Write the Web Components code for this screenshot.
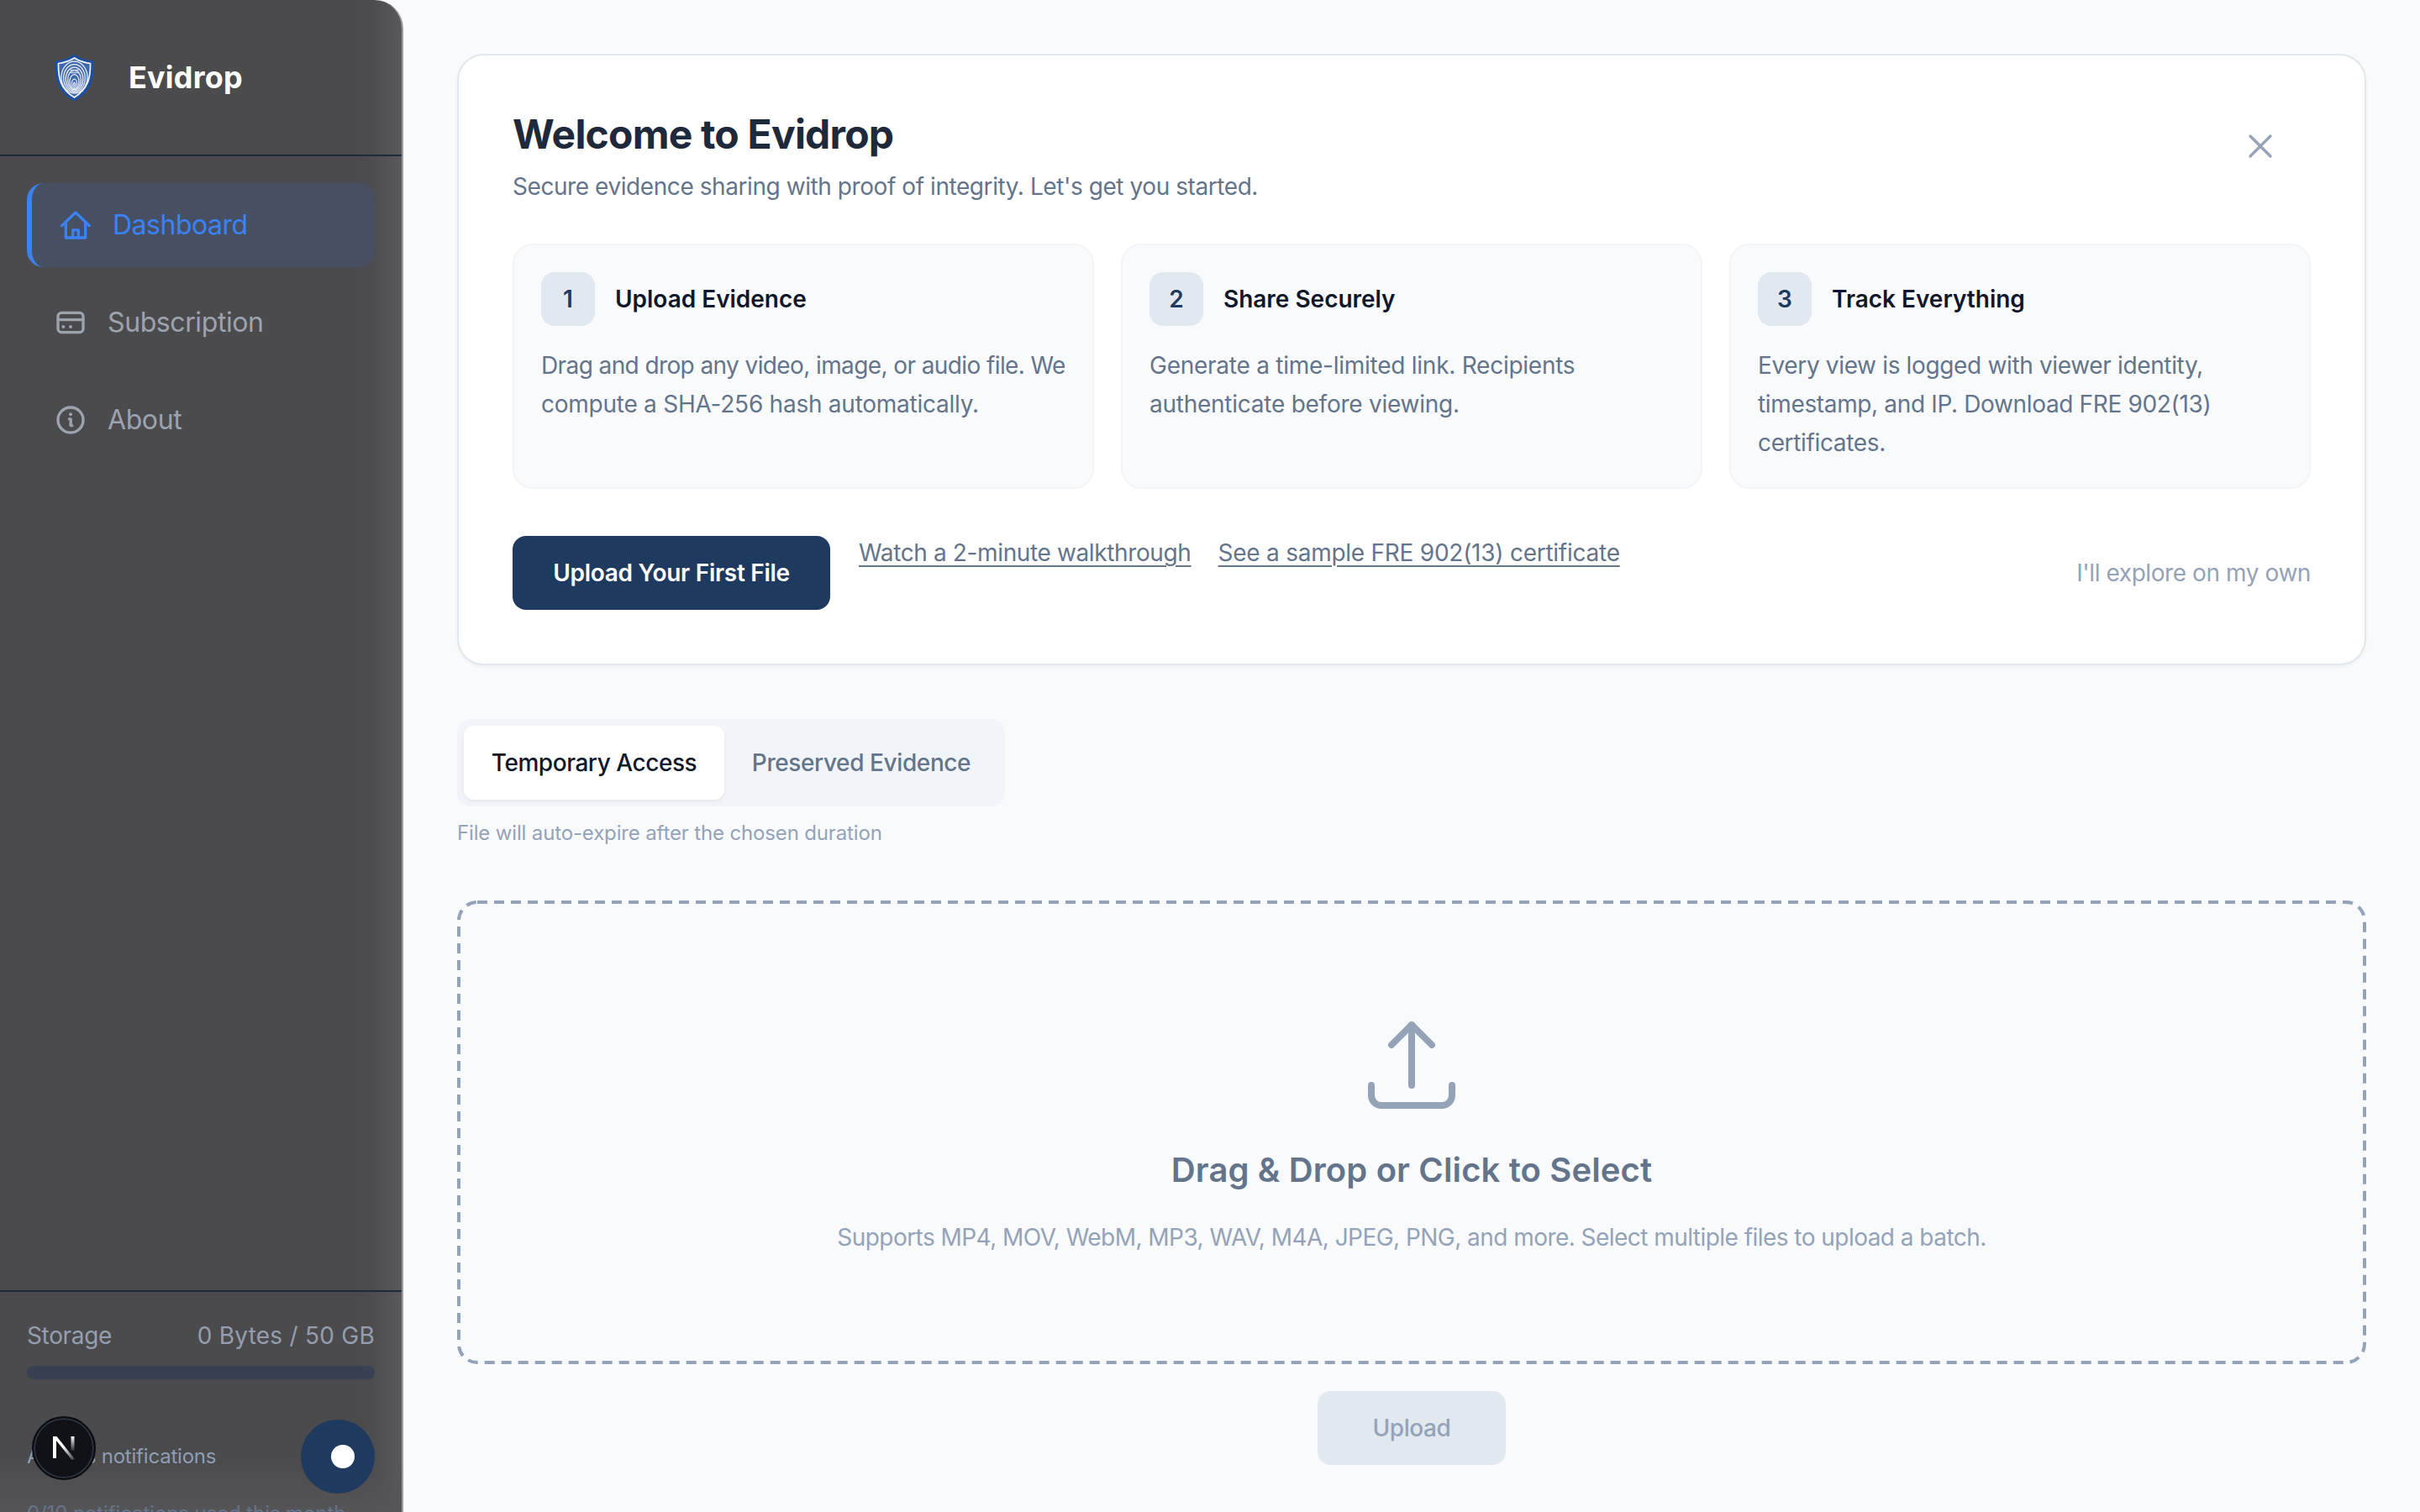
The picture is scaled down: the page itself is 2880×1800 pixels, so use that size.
<!DOCTYPE html>
<html lang="en"><head><meta charset="utf-8"><title>Evidrop</title>
<style>
html,body{margin:0;padding:0;height:100%;background:#f8fafc;font-family:Inter,"Liberation Sans",sans-serif;overflow:hidden}
</style></head><body>
<ev-app>
  <ev-sidebar slot="side"></ev-sidebar>
  <ev-welcome></ev-welcome>
  <ev-tabs></ev-tabs>
  <ev-drop></ev-drop>
</ev-app>
<script>
const FONT='Inter,"Liberation Sans",sans-serif';
function def(name,html){
  customElements.define(name,class extends HTMLElement{
    connectedCallback(){ if(this.shadowRoot) return; const r=this.attachShadow({mode:'open'}); r.innerHTML=typeof html==='function'?html(this):html; }
  });
}
def('ev-app',`<style>
:host{display:flex;width:2880px;height:1800px;overflow:hidden;background:#f8fafc}
main{flex:1;min-width:0;padding:64px;box-sizing:border-box;display:flex;flex-direction:column}
</style><slot name="side"></slot><main><slot></slot></main>`);

def('ev-shield',`<style>:host{display:flex;width:80px;height:80px;align-items:center;justify-content:center}</style>
<svg width="49" height="57" viewBox="0 0 48 57" fill="none">
<path d="M24 .5C30 5 37 7.5 47.500 8.500c.6 21-3 37-23.500 48C3.500 45.500 -.1 29.500 .5 8.500 11 7.500 18 5 24 .5Z" fill="#1f4f9f"/>
<path d="M24 5c5.500 3.500 11 5.500 19 6.500.3 17-2.500 30-19 40.500C7.500 42 4.700 29 5 11.500 13 10.500 18.500 8.500 24 5Z" fill="#3f68ac" stroke="#f2f5fa" stroke-width="1.700"/>
<g stroke="#eef2f8" stroke-width="1.250"><ellipse cx="24" cy="28" rx="15.500" ry="19"/><ellipse cx="24" cy="29" rx="12.800" ry="16.500"/><ellipse cx="24" cy="30" rx="10.300" ry="14"/><ellipse cx="24" cy="31" rx="7.900" ry="11.500"/><ellipse cx="24" cy="33" rx="5.500" ry="8.500"/><ellipse cx="24" cy="35" rx="3" ry="5"/><ellipse cx="24" cy="36" rx="1" ry="2"/></g>
<path d="M19 19.500h10M19 22.500h10" stroke="#c3d0e4" stroke-width="1.600"/>
</svg>`);

def('ev-nav-item',h=>{
  const icons={
    home:`<path d="M2.200 12.400 12 3l9.800 9.400"/><path d="M5 10.500V21h14V10.500"/><path d="M10 21v-5.500h4V21"/>`,
    card:`<rect x="3" y="5" width="18" height="14" rx="2.600"/><path d="M3 10h18"/><path d="M6.800 15h.01M12 15h.01" stroke-width="2.400" stroke-linecap="round"/>`,
    info:`<circle cx="12" cy="12" r="9"/><path d="M11 11.300h1.100V16h1" stroke-linejoin="round"/><path d="M12 8h.01" stroke-width="2.400" stroke-linecap="round"/>`
  };
  const a=h.hasAttribute('active');
  return `<style>
:host{display:block}
a{display:flex;align-items:center;gap:24px;height:100px;box-sizing:border-box;padding-left:32px;border-radius:20px;color:#9ca3af;font:400 32px/40px ${FONT};letter-spacing:-.4px;text-decoration:none}
a.on{background:#475063;border-left:6px solid #3b82f6;color:#3b82f6;letter-spacing:-.5px}
svg{width:40px;height:40px;flex:none;fill:none;stroke:currentColor;stroke-width:2;stroke-linecap:round;stroke-linejoin:round}
</style><a class="${a?'on':''}" href="#"><svg viewBox="0 0 24 24">${icons[h.getAttribute('icon')]}</svg><slot></slot></a>`;
});

def('ev-sidebar',`<style>
:host{display:flex;flex-direction:column;flex:none;position:relative;width:480px;height:1800px;box-sizing:border-box;border-right:2px solid #9b9ba6;border-top-right-radius:34px;overflow:hidden;
 background:linear-gradient(90deg,#4b4b4d 0,#4b4b4d 430px,#4d4d4f 444px,#525254 460px,#5a5a5c 478px);color:#94a3b8}
.brand{display:flex;align-items:center;gap:25px;height:186px;padding-left:48px;box-sizing:border-box;flex:none;border-bottom:2px solid #1e293b;font:700 36px/44px ${FONT};letter-spacing:.2px;color:#fff}
nav{flex:1;min-height:0;padding:32px 32px 0;display:flex;flex-direction:column;gap:16px}
footer{flex:0 0 264px;box-sizing:border-box;border-top:2px solid #1e293b;padding:32px 32px 0;overflow:hidden;background:linear-gradient(180deg,transparent 200px,#555557 262px)}
.row{display:flex;justify-content:space-between;align-items:center;font:400 28px/40px ${FONT};letter-spacing:-.35px;color:#959eae}
.row span+span{letter-spacing:.25px}
.bar{height:16px;border-radius:8px;background:#384153;margin-top:16px}
.notif{display:flex;align-items:center;justify-content:space-between;margin-top:48px;font:400 24px/32px ${FONT};letter-spacing:-.2px;color:#8f9db3}
.tog{width:88px;height:88px;border-radius:50%;background:#1e3a5f;display:flex;align-items:center;justify-content:flex-end;box-sizing:border-box;padding-right:24px}
.tog i{width:28px;height:28px;border-radius:50%;background:#fff;display:block}
small{display:block;font:400 24px/32px ${FONT};letter-spacing:-.1px;color:#64748b;margin-top:8px;white-space:nowrap}
.n{position:absolute;left:38px;top:1686px;width:76px;height:76px;box-sizing:border-box;border-radius:50%;background:#101218;border:2px solid #0b0c10;box-shadow:inset 0 0 0 2px #2a3140,inset 0 0 0 3px #101218;display:flex;align-items:center;justify-content:center}
</style>
<div class="brand"><ev-shield></ev-shield><span>Evidrop</span></div>
<nav><ev-nav-item icon="home" active>Dashboard</ev-nav-item><ev-nav-item icon="card">Subscription</ev-nav-item><ev-nav-item icon="info">About</ev-nav-item></nav>
<footer>
 <div class="row"><span>Storage</span><span>0 Bytes / 50 GB</span></div>
 <div class="bar"></div>
 <div class="notif"><span>Access notifications</span><div class="tog"><i></i></div></div>
 <small>0/10 notifications used this month</small>
</footer>
<div class="n"><svg width="30" height="30" viewBox="0 0 30 30" fill="none"><defs>
<linearGradient id="a" x1="0" y1="0" x2="1" y2="1"><stop offset=".45" stop-color="#fff"/><stop offset="1" stop-color="#fff" stop-opacity=".15"/></linearGradient>
<linearGradient id="b" x1="0" y1="0" x2="0" y2="1"><stop offset="0" stop-color="#fff"/><stop offset="1" stop-color="#fff" stop-opacity=".1"/></linearGradient></defs>
<path d="M2 1h4v26H2z" fill="#fff"/><path d="M2 1h4.500L28 28l-3.500 1z" fill="url(#a)"/><path d="M23.500 1H27.500v17h-4z" fill="url(#b)"/></svg></div>`);

def('ev-step',h=>`<style>
:host{display:block;background:#f8fafc;border:2px solid #f1f5f9;border-radius:24px;padding:32px 32px 30px;box-sizing:border-box}
.h{display:flex;align-items:center;gap:24px;font:600 28px/40px ${FONT};letter-spacing:-.02px;color:#0f172a}
.n{width:64px;height:64px;border-radius:16px;background:#e2e8f0;color:#1e3a5f;display:flex;align-items:center;justify-content:center}
p{margin:24px 0 0;font:400 28px/46px ${FONT};letter-spacing:var(--ls,-.35px);color:#64748b}
</style><div class="h"><span class="n">${h.getAttribute('n')}</span><span>${h.getAttribute('title')}</span></div><p><slot></slot></p>`);

def('ev-welcome',`<style>
:host{display:block;background:#fff;border:2px solid #e2e8f0;border-radius:32px;padding:64px;box-shadow:0 2px 4px rgba(15,23,42,.05)}
.top{display:flex;justify-content:space-between;align-items:flex-start}
h1{margin:0;font:700 48px/60px ${FONT};letter-spacing:-.8px;color:#1e293b}
.sub{margin:10px 0 0;font:400 28px/44px ${FONT};letter-spacing:-.43px;color:#64748b}
.x{width:48px;height:48px;margin:20px 36px 0 0;stroke:#94a3b8;fill:none;stroke-width:1.600;stroke-linecap:round}
.grid{display:grid;grid-template-columns:repeat(3,1fr);gap:32px;margin-top:46px}
.l2{letter-spacing:-.25px}
.act{display:flex;align-items:flex-start;gap:32px;margin-top:56px}
.btn{display:flex;align-items:center;justify-content:center;width:378px;height:88px;border-radius:16px;background:#1e3a5f;color:#fff;font:600 28px/40px ${FONT};letter-spacing:-.28px}
a{color:#64748b;font:400 28px/40px ${FONT};letter-spacing:-.37px;text-decoration:underline;text-underline-offset:5px;text-decoration-thickness:2px;margin-left:2px}
a+a{letter-spacing:-.25px;margin-left:0}
.skip{margin-left:auto;align-self:center;color:#94a3b8;font:400 28px/40px ${FONT};letter-spacing:-.42px}
</style>
<div class="top"><div><h1>Welcome to Evidrop</h1><p class="sub">Secure evidence sharing with proof of integrity. Let's get you started.</p></div>
<svg class="x" viewBox="0 0 24 24"><path d="M6 6l12 12M18 6 6 18"/></svg></div>
<div class="grid">
<ev-step n="1" title="Upload Evidence" style="--ls:-.6px;white-space:nowrap">Drag and drop any video, image, or audio file. We<br><span class="l2">compute a SHA-256 hash automatically.</span></ev-step>
<ev-step n="2" title="Share Securely" style="--ls:-.25px">Generate a time-limited link. Recipients authenticate before viewing.</ev-step>
<ev-step n="3" title="Track Everything">Every view is logged with viewer identity, timestamp, and IP. Download FRE 902(13) certificates.</ev-step>
</div>
<div class="act"><div class="btn">Upload Your First File</div><a href="#">Watch a 2-minute walkthrough</a><a href="#">See a sample FRE 902(13) certificate</a><span class="skip">I'll explore on my own</span></div>`);

def('ev-tabs',`<style>
:host{display:block;margin-top:64px}
.t{display:inline-flex;padding:8px;background:#f1f5f9;border-radius:16px;box-sizing:border-box;height:104px;vertical-align:top}
.t span{display:flex;align-items:center;justify-content:center;width:326px;border-radius:12px;font:500 28px/40px ${FONT};letter-spacing:-.4px;color:#64748b}
.t span.on{width:310px;background:#fff;color:#0f172a;letter-spacing:-.45px;box-shadow:0 2px 4px rgba(15,23,42,.06)}
p{margin:16px 0 0;font:400 24px/32px ${FONT};letter-spacing:-.15px;color:#94a3b8}
</style><div class="t"><span class="on">Temporary Access</span><span>Preserved Evidence</span></div><p>File will auto-expire after the chosen duration</p>`);

def('ev-drop',`<style>
:host{display:flex;flex-direction:column;align-items:center;margin-top:64px}
.z{position:relative;width:100%;height:552px;box-sizing:border-box;display:flex;flex-direction:column;align-items:center;justify-content:center}
.d{position:absolute;left:0;top:0;width:2272px;height:552px;fill:none;stroke:#94a3b8;stroke-width:4;stroke-dasharray:12 8}
.i{width:128px;height:128px;margin-top:3px;fill:none;stroke:#94a3b8;stroke-width:1.500;stroke-linecap:round;stroke-linejoin:round}
h2{margin:33px 0 0;font:600 40px/56px ${FONT};letter-spacing:.13px;color:#64748b}
p{margin:30px 0 0;font:400 28px/44px ${FONT};letter-spacing:-.54px;color:#94a3b8}
.b{margin-top:32px;width:224px;height:88px;border-radius:16px;background:#e2e8f0;color:#94a3b8;display:flex;align-items:center;justify-content:center;font:500 28px/40px ${FONT};letter-spacing:-.45px}
</style><div class="z"><svg class="d"><rect x="2" y="2" width="2268" height="548" rx="22"/></svg>
<svg class="i" viewBox="0 0 24 24"><path d="M3 16.500v2.250A2.250 2.250 0 0 0 5.250 21h13.500A2.250 2.250 0 0 0 21 18.750V16.500m-13.500-9L12 3m0 0 4.500 4.500M12 3v13.500"/></svg>
<h2>Drag &amp; Drop or Click to Select</h2><p>Supports MP4, MOV, WebM, MP3, WAV, M4A, JPEG, PNG, and more. Select multiple files to upload a batch.</p></div>
<div class="b">Upload</div>`);
</script></body></html>
